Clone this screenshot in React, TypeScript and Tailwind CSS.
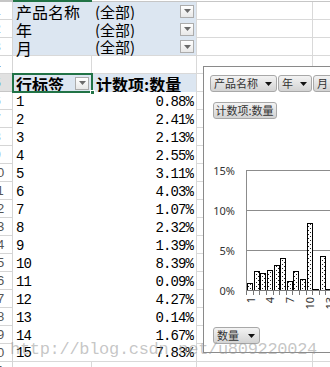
import React from "react";

const data = [0.88, 2.41, 2.13, 2.55, 3.11, 4.03, 1.07, 2.32, 1.39, 8.39, 0.09, 4.27, 0.14, 1.67, 7.83];

const cjk = "font-['Noto_Sans_CJK_SC',sans-serif]";
const mono = "font-['Liberation_Mono',monospace] text-[14px] tracking-[-0.9px]";

function DropBtn() {
  return (
    <div className="w-[14px] h-[13px] border border-[#acacac] bg-linear-to-b from-[#ffffff] to-[#e8e8e8] flex items-center justify-center">
      <svg width="7" height="4" viewBox="0 0 7 4">
        <path d="M0 0 H7 L3.5 4 Z" fill="#6b6b6b" />
      </svg>
    </div>
  );
}

function ChartBtn({ label, arrow = true, w, center = false }: { label: string; arrow?: boolean; w: string; center?: boolean }) {
  return (
    <div
      className={`${w} h-[17px] shrink-0 flex items-center ${center ? "justify-center" : "justify-between"} whitespace-nowrap rounded-[3px] border border-[#a8a8a8] bg-linear-to-b from-[#f3f3f3] to-[#d3d3d3] pl-[3px] pr-[4px] text-[11px] leading-none text-[#333] ${cjk}`}
    >
      <span>{label}</span>
      {arrow && (
        <svg width="7" height="4" viewBox="0 0 7 4">
          <path d="M0 0 H7 L3.5 4 Z" fill="#111" />
        </svg>
      )}
    </div>
  );
}

function Plot() {
  const y0 = 128.5;
  const per = 8.03;
  const left = 42.7;
  const cw = 6.6;
  return (
    <svg width="140" height="155" className="block">
      <defs>
        <pattern id="dots" width="4" height="4" patternUnits="userSpaceOnUse">
          <rect width="4" height="4" fill="#fff" />
          <rect x="0" y="0" width="1" height="1" fill="#222" />
          <rect x="2" y="2" width="1" height="1" fill="#222" />
        </pattern>
      </defs>
      {[15, 10, 5, 0].map((v, i) => (
        <text
          key={v}
          x={31}
          y={8 + i * 40.17}
          textAnchor="end"
          dominantBaseline="central"
          fontSize={11}
          fontFamily="'Noto Sans', sans-serif"
          fill="#333"
        >
          {v}%
        </text>
      ))}
      {[15, 10, 5].map((v) => (
        <line key={v} x1={42.5} x2={140} y1={y0 - v * per} y2={y0 - v * per} stroke="#8c8c8c" strokeWidth={1} shapeRendering="crispEdges" />
      ))}
      <line x1={42.5} x2={42.5} y1={y0 - 15 * per} y2={y0 + 4} stroke="#8c8c8c" shapeRendering="crispEdges" />
      {data.map((v, i) => {
        const h = v * per;
        const x = left + cw * i + 0.9;
        return (
          <rect
            key={i}
            x={x}
            y={y0 - h}
            width={5}
            height={h}
            fill="url(#dots)"
            stroke="#000"
            strokeWidth={1}
            shapeRendering="crispEdges"
          />
        );
      })}
      <line x1={42.5} x2={140} y1={y0} y2={y0} stroke="#777" shapeRendering="crispEdges" />
      {Array.from({ length: 16 }).map((_, i) => (
        <line key={i} x1={left + cw * i} x2={left + cw * i} y1={y0} y2={y0 + 4} stroke="#777" shapeRendering="crispEdges" />
      ))}
      {[0, 3, 6, 9, 12].map((i) => {
        const cx = left + cw * (i + 0.5);
        return (
          <text
            key={i}
            transform={`translate(${cx} 135) rotate(-90)`}
            textAnchor="end"
            dominantBaseline="central"
            fontSize={11}
            fontFamily="'Noto Sans', sans-serif"
            fill="#333"
          >
            {i + 1}
          </text>
        );
      })}
    </svg>
  );
}

export default function App() {
  const rows = Array.from({ length: 21 }, (_, i) => i + 1);
  const line = "border-[#d9d9d9]";
  return (
    <div className="relative w-[330px] h-[367px] overflow-hidden bg-white text-black">
      {/* column header bottom edge */}
      <div className="flex h-[2px]">
        <div className="w-[13px] bg-[#c6c6c6]" />
        <div className="w-[79px] bg-[#217346]" />
        <div className="flex-1 border-b border-[#c6c6c6]" />
      </div>
      <div className="grid grid-cols-[13px_79px_105px_116px_1fr] auto-rows-[18px]">
        {rows.map((r) => {
          const isFilter = r <= 3;
          const isHeader = r === 5;
          const isData = r >= 6 && r <= 20;
          const filterLabels = ["产品名称", "年", "月"];
          return (
            <React.Fragment key={r}>
              <div
                className={`flex justify-end overflow-hidden border-r border-b ${
                  isHeader ? "bg-[#e1e1e1] border-r-[#217346] border-b-[#c6c6c6]" : "bg-white border-[#d5d5d5]"
                }`}
              >
                <span
                  className={`w-[30px] shrink-0 text-center text-[13px] leading-[18px] font-['Liberation_Sans',sans-serif] ${
                    isHeader ? "text-[#217346]" : "text-[#555]"
                  }`}
                >
                  {r}
                </span>
              </div>
              {isFilter ? (
                <>
                  <div className={`bg-[#dce6f1] flex items-center pl-[3px] pt-[2px] text-[16px] ${cjk} ${r === 3 ? `border-b ${line}` : ""}`}>
                    {filterLabels[r - 1]}
                  </div>
                  <div className={`bg-[#dce6f1] flex items-center justify-between pl-[3px] pr-[2px] border-r ${line} ${r === 3 ? "border-b" : ""}`}>
                    <span className={`text-[15px] pt-[2px] ${cjk}`}>(全部)</span>
                    <DropBtn />
                  </div>
                </>
              ) : isHeader ? (
                <>
                  <div className={`bg-[#dce6f1] flex items-center justify-between pl-[3px] pr-[3px]`}>
                    <span className={`text-[16px] font-bold pt-[2px] ${cjk}`}>行标签</span>
                    <DropBtn />
                  </div>
                  <div className={`bg-[#dce6f1] flex items-center pl-[4px] border-r ${line}`}>
                    <span className={`text-[16px] font-bold pt-[2px] ${cjk}`}>计数项:数量</span>
                  </div>
                </>
              ) : isData ? (
                <>
                  <div className={`bg-white flex items-center pl-[3px] pt-[2px] ${mono} ${r === 20 ? `border-b ${line}` : ""}`}>
                    {r - 5}
                  </div>
                  <div className={`bg-white flex items-center justify-end pr-[3px] pt-[2px] border-r ${line} ${mono} ${r === 20 ? "border-b" : ""}`}>
                    {data[r - 6].toFixed(2)}%
                  </div>
                </>
              ) : (
                <>
                  <div className={`border-r border-b ${line}`} />
                  <div className={`border-r border-b ${line}`} />
                </>
              )}
              <div className={`border-r border-b ${line}`} />
              <div className={`border-b ${line}`} />
            </React.Fragment>
          );
        })}
      </div>

      {/* active cell */}
      <div className="absolute left-[12px] top-[73px] w-[81px] h-[20px] border-2 border-[#217346] pointer-events-none">
        <div className="absolute right-[-4px] bottom-[-4px] w-[5px] h-[5px] bg-[#217346] border border-white" />
      </div>

      {/* chart */}
      <div className="absolute left-[203px] top-[66px] w-[150px] h-[287px] border border-[#8a8a8a] bg-white flex flex-col">
        <div className="flex gap-[1px] mt-[8px] ml-[6px]">
          <ChartBtn label="产品名称" w="w-[67px]" />
          <ChartBtn label="年" w="w-[34px]" />
          <ChartBtn label="月" w="w-[34px]" />
        </div>
        <div className="mt-[10px] ml-[9px]">
          <ChartBtn label="计数项:数量" arrow={false} center w="w-[64px]" />
        </div>
        <div className="mt-[43px]">
          <Plot />
        </div>
        <div className="mt-[10px] ml-[9px]">
          <ChartBtn label="数量" w="w-[47px]" />
        </div>
      </div>

      {/* watermark */}
      <div className="absolute left-[10px] top-[337px] whitespace-nowrap pointer-events-none font-['Liberation_Mono',monospace] text-[17px] tracking-[-0.3px] text-[rgba(150,150,150,0.55)]">
        http://blog.csdn.net/u809220024
      </div>
    </div>
  );
}
